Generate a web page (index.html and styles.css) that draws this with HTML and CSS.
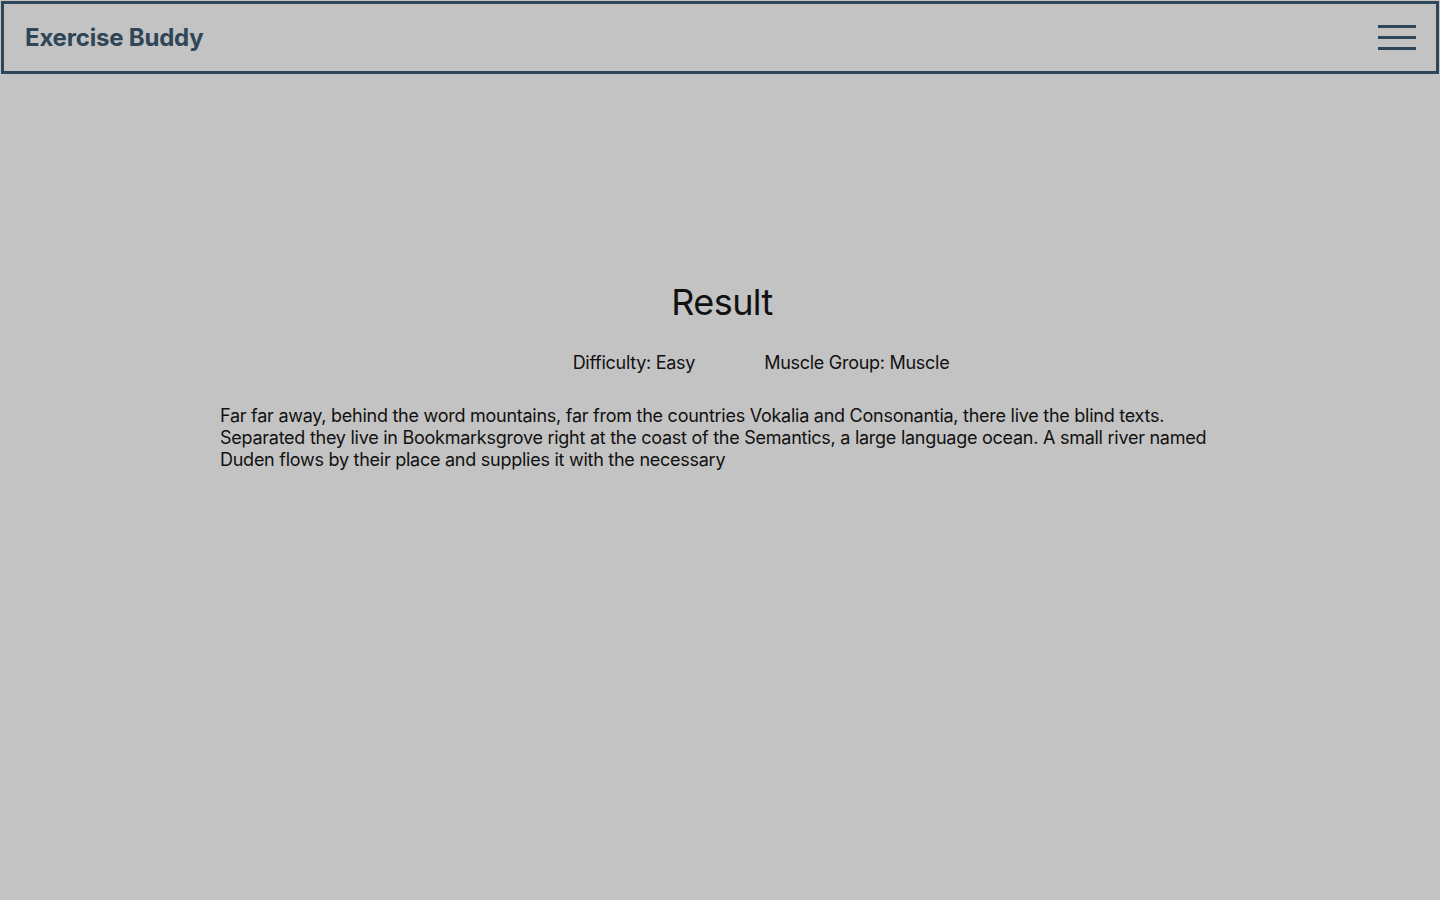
FILE: index.html
```html
<!DOCTYPE html>
<html lang="en">
<head>
<meta charset="utf-8">
<title>Exercise Buddy</title>
<link rel="stylesheet" href="styles.css">
</head>
<body>
<header class="topbar">
  <div class="brand">Exercise Buddy</div>
  <button class="menu" aria-label="Menu">
    <span class="bar"></span><span class="bar"></span><span class="bar"></span>
  </button>
</header>
<main class="result">
  <h1 class="result-title">Result</h1>
  <div class="meta">
    <span class="meta-item">Difficulty: Easy</span>
    <span class="meta-item">Muscle Group: Muscle</span>
  </div>
  <p class="desc">Far far away, behind the word mountains, far from the countries Vokalia and Consonantia, there live the blind texts. Separated they live in Bookmarksgrove right at the coast of the Semantics, a large language ocean. A small river named Duden flows by their place and supplies it with the necessary</p>
</main>
</body>
</html>
```
FILE: styles.css
```css
html, body {
  margin: 0;
  padding: 0;
}
body {
  background: #c3c3c3;
  font-family: Inter, "Noto Sans", sans-serif;
  color: #111111;
  min-height: 900px;
}
.topbar {
  margin: 1px;
  height: 67px;
  border: 3px solid #2e4657;
  display: flex;
  align-items: center;
  justify-content: space-between;
  padding: 0 20px 0 21px;
}
.brand {
  font-size: 24px;
  font-weight: 700;
  color: #2e4657;
  letter-spacing: -0.2px;
}
.menu {
  background: none;
  border: 0;
  padding: 0;
  width: 38px;
  height: 25px;
  display: flex;
  flex-direction: column;
  justify-content: space-between;
  cursor: pointer;
}
.bar {
  display: block;
  height: 3px;
  width: 38px;
  background: #2e4657;
}
.result {
  width: 1000px;
  margin: 0 auto;
  padding-top: 205px;
}
.result-title {
  margin: 0;
  text-align: center;
  font-size: 36px;
  font-weight: 400;
  line-height: 44px;
  letter-spacing: -0.6px;
  padding-left: 4px;
}
.meta {
  display: flex;
  justify-content: center;
  gap: 69px;
  padding-left: 82px;
  margin-top: 28px;
  font-size: 18px;
  line-height: 22px;
  letter-spacing: -0.28px;
}
.desc {
  margin: 31px 0 0;
  font-size: 18px;
  line-height: 22px;
  letter-spacing: -0.26px;
}
```
